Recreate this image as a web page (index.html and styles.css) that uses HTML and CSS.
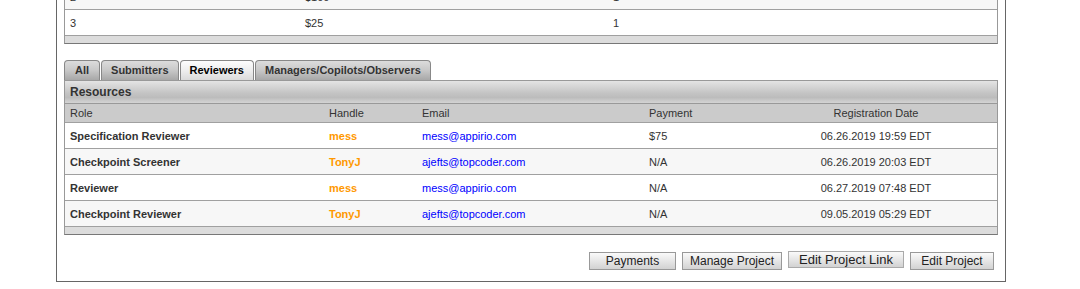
FILE: index.html
```html
<!DOCTYPE html>
<html lang="en">

<head>
    <meta charset="UTF-8">
    <title>Project Details</title>
    <link rel="stylesheet" href="styles.css">
</head>

<body>

    <div class="page">

        <!-- prizes -->
        <div class="grid prizes">
            <div class="row alt">
                <div>2</div>
                <div>$100</div>
                <div>1</div>
            </div>
            <div class="row">
                <div>3</div>
                <div>$25</div>
                <div>1</div>
            </div>
            <div class="grid-foot"></div>
        </div>

        <!-- resources -->
        <div class="tabs">
            <span class="tab tab-all">All</span>
            <span class="tab">Submitters</span>
            <span class="tab active">Reviewers</span>
            <span class="tab">Managers/Copilots/Observers</span>
        </div>

        <div class="grid resources">
            <div class="grid-title">Resources</div>
            <div class="row head">
                <div>Role</div>
                <div>Handle</div>
                <div>Email</div>
                <div>Payment</div>
                <div class="center">Registration Date</div>
                <div></div>
            </div>
            <div class="row">
                <div class="role">Specification Reviewer</div>
                <div class="handle">mess</div>
                <div><a href="#">mess@appirio.com</a></div>
                <div>$75</div>
                <div class="center">06.26.2019 19:59 EDT</div>
                <div></div>
            </div>
            <div class="row alt">
                <div class="role">Checkpoint Screener</div>
                <div class="handle">TonyJ</div>
                <div><a href="#">ajefts@topcoder.com</a></div>
                <div>N/A</div>
                <div class="center">06.26.2019 20:03 EDT</div>
                <div></div>
            </div>
            <div class="row">
                <div class="role">Reviewer</div>
                <div class="handle">mess</div>
                <div><a href="#">mess@appirio.com</a></div>
                <div>N/A</div>
                <div class="center">06.27.2019 07:48 EDT</div>
                <div></div>
            </div>
            <div class="row alt">
                <div class="role">Checkpoint Reviewer</div>
                <div class="handle">TonyJ</div>
                <div><a href="#">ajefts@topcoder.com</a></div>
                <div>N/A</div>
                <div class="center">09.05.2019 05:29 EDT</div>
                <div></div>
            </div>
            <div class="grid-foot"></div>
        </div>

        <div class="actions">
            <button class="btn btn-payments">Payments</button>
            <button class="btn btn-manage">Manage Project</button>
            <button class="btn btn-link">Edit Project Link</button>
            <button class="btn btn-edit">Edit Project</button>
        </div>

    </div>

</body>

</html>
```

FILE: styles.css
```css
body {
    margin: 0;
    padding: 0;
    background-color: #fff;
    font-family: 'Liberation Sans', Arial, sans-serif;
    font-size: 11px;
    color: #333;
}

.page {
    width: 934px;
    margin: -16px 0 0 56px;
    padding: 0 7px 11px;
    border: 1px solid #666;
    border-top: none;
}

.grid {
    border-left: 1px solid #999;
    border-right: 1px solid #999;
    border-bottom: 1px solid #777;
}

.row {
    display: grid;
    align-items: center;
    height: 25px;
    border-bottom: 1px solid #a0a0a0;
    background-color: #fff;
}

.row > div {
    padding-left: 5px;
}

.row.alt {
    background-color: #f7f7f7;
}

.prizes .row {
    grid-template-columns: 235px 308px 1fr;
}

.resources .row {
    grid-template-columns: 259px 93px 227px 156px 152px 1fr;
}

.resources .row.head {
    height: 18px;
    background-color: #cbcbcb;
    border-top: 1px solid #999;
}

.row .center {
    padding-left: 0;
    text-align: center;
}

.grid-foot {
    height: 7px;
    background-color: #dcdcdc;
}

.grid-title {
    height: 22px;
    line-height: 22px;
    padding-left: 5px;
    font-size: 12px;
    font-weight: bold;
    color: #333;
    background: linear-gradient(#e4e4e4, #c4c4c4 55%, #bcbcbc 75%, #d4d4d4);
}

.resources {
    border-top: 1px solid #999;
}

.role {
    font-weight: bold;
}

.handle {
    font-weight: bold;
    color: #ff9900;
}

a {
    color: #0000ff;
    text-decoration: none;
}

/* tabs */

.tabs {
    display: flex;
    gap: 1px;
    margin-top: 16px;
    height: 20px;
}

.tab {
    height: 19px;
    line-height: 19px;
    padding: 0 9px;
    border: 1px solid #888;
    border-bottom: none;
    border-radius: 4px 4px 0 0;
    font-weight: bold;
    color: #333;
    background: linear-gradient(#dcdcdc, #cacaca 45%, #b4b4b4 80%, #a8a8a8);
}

.tab-all {
    padding: 0 10px;
}

.tab.active {
    color: #000;
    background: linear-gradient(#fdfdfd, #eeeeee 50%, #dadada);
}

/* buttons */

.actions {
    display: flex;
    justify-content: flex-end;
    align-items: flex-start;
    gap: 6px;
    height: 18px;
    margin-top: 17px;
    padding-right: 4px;
}

.btn {
    height: 18px;
    padding: 0;
    border: 1px solid #999;
    font-family: 'Liberation Sans', Arial, sans-serif;
    font-size: 12px;
    color: #222;
    background: linear-gradient(#fafafa, #e6e6e6 50%, #d2d2d2);
    cursor: pointer;
}

.btn-payments {
    width: 87px;
}

.btn-manage {
    width: 100px;
}

.btn-link {
    width: 116px;
    height: 17px;
    margin-top: -1px;
    font-size: 13px;
    line-height: 14px;
    border-color: #aaa;
}

.btn-edit {
    width: 84px;
}
```
